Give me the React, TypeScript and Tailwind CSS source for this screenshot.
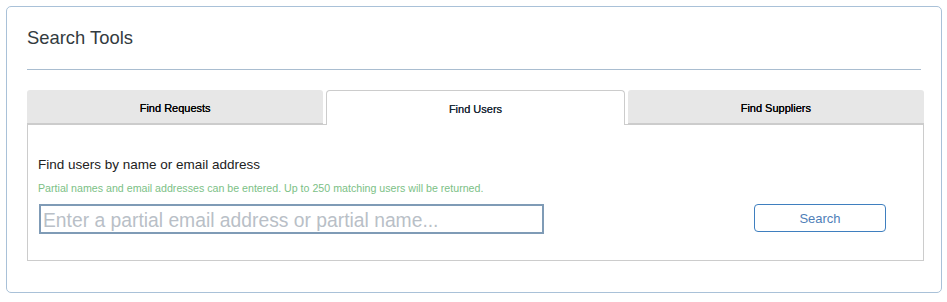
import React, { useState } from 'react';

const tabs = ['Find Requests', 'Find Users', 'Find Suppliers'];

const App: React.FC = () => {
  const [active, setActive] = useState('Find Users');
  const [query, setQuery] = useState('');

  return (
    <div className="p-[6px] bg-white font-['Liberation_Sans',Arial,sans-serif]">
      <div className="h-[287px] w-[936px] rounded-[5px] border border-[#a9c1d8] bg-white">
        {/* Header */}
        <div className="pl-[20px] pr-[20px] pt-[21px]">
          <h1 className="text-[18.4px] leading-[20px] text-[#333b40]">Search Tools</h1>
          <div className="mt-[21px] h-px bg-[#a9bdd0]"></div>
        </div>

        <div className="pl-[20px] pr-[17px] pt-[20px]">
          {/* Tabs */}
          <div className="relative z-10 flex gap-[3px]">
            {tabs.map(tab =>
              tab === active ? (
                <button
                  key={tab}
                  onClick={() => setActive(tab)}
                  className="-mb-px h-[35px] flex-1 rounded-t-[4px] border border-b-0 border-[#ccc] bg-white pt-[2px] text-[11px] text-[#1c2a36] [text-shadow:0_0_0.3px_#1c2a36]"
                >
                  {tab}
                </button>
              ) : (
                <button
                  key={tab}
                  onClick={() => setActive(tab)}
                  className="h-[34px] flex-1 rounded-t-[3px] border-b border-[#ccc] bg-[#e7e7e7] pt-[3px] text-[11px] text-black [text-shadow:0_0_0.3px_#000]"
                >
                  {tab}
                </button>
              )
            )}
          </div>

          {/* Panel */}
          <div className="h-[137px] border border-[#ccc] pl-[10px] pr-[37px] pt-[32px]">
            <p className="text-[13.5px] leading-[16px] text-[#222]">Find users by name or email address</p>
            <p className="mt-[9px] text-[10.65px] leading-[13px] text-[#7cbf86]">
              Partial names and email addresses can be entered. Up to 250 matching users will be returned.
            </p>
            <div className="mt-[9px] flex items-start justify-between">
              <input
                value={query}
                onChange={e => setQuery(e.target.value)}
                placeholder="Enter a partial email address or partial name..."
                className="ml-px h-[30px] w-[505px] border-2 border-[#7f9bb6] px-[2px] pt-[3px] text-[19.3px] text-[#333] outline-none placeholder:text-[#b9bfc7]"
              />
              <button className="h-[28px] w-[132px] rounded-[4px] border border-[#3f7fbf] bg-white pt-px text-[13px] text-[#4f80b8]">
                Search
              </button>
            </div>
          </div>
        </div>
      </div>
    </div>
  );
};

export default App;
